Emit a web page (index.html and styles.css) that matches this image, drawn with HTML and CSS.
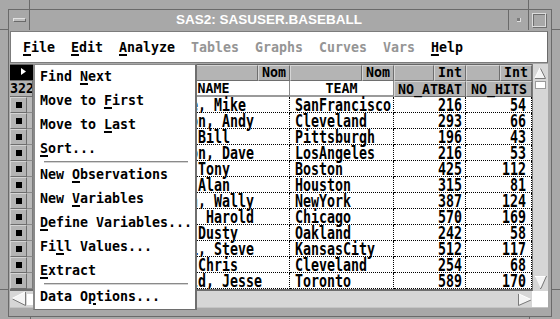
FILE: index.html
```html
<!DOCTYPE html>
<html>
<head>
<meta charset="utf-8">
<title>SAS2: SASUSER.BASEBALL</title>
<link rel="stylesheet" href="styles.css">
</head>
<body>
<div class="screen">
  <div class="window">
    <div class="titlebar">
      <div class="tbtn tbtn-menu"><span class="bar"></span></div>
      <div class="title">SAS2: SASUSER.BASEBALL</div>
      <div class="tbtn tbtn-min"><span class="dot"></span></div>
      <div class="tbtn tbtn-max"><span class="box"></span></div>
    </div>
    <div class="menubar">
      <span class="mi"><u>F</u>ile</span>
      <span class="mi"><u>E</u>dit</span>
      <span class="mi"><u>A</u>nalyze</span>
      <span class="mi off">Tables</span>
      <span class="mi off">Graphs</span>
      <span class="mi off">Curves</span>
      <span class="mi off">Vars</span>
      <span class="mi"><u>H</u>elp</span>
    </div>
    <div class="content">
      <div class="tablerow">
        <div class="grid">
          <!-- type row -->
          <div class="corner"><svg width="23" height="15" viewBox="0 0 23 15"><polygon points="11,3 16,6.5 11,10" fill="#fff"/></svg></div>
          <div class="t"><span class="fill"></span><span class="lab">Nom</span></div>
          <div class="t"><span class="fill"></span><span class="lab">Nom</span></div>
          <div class="t"><span class="fill"></span><span class="lab">Nom</span></div>
          <div class="t"><span class="fill"></span><span class="lab">Int</span></div>
          <div class="t"><span class="fill"></span><span class="lab">Int</span></div>
          <!-- name row -->
          <div class="count">322</div>
          <div class="hn">ID</div>
          <div class="hn"><span class="hv">NAME</span></div>
          <div class="hn"><span class="hv">TEAM</span></div>
          <div class="hg"><span class="hv">NO_ATBAT</span></div>
          <div class="hg"><span class="hv">NO_HITS</span></div>
          <!-- data -->
          <div class="rm"><span class="rb"><i></i></span><span class="rg"></span></div><div class="d"></div><div class="d l"><span class="v">Aldrete, Mike</span></div><div class="d t2"><span class="v">SanFrancisco</span></div><div class="d r"><span class="v">216</span></div><div class="d r2"><span class="v">54</span></div>
          <div class="rm"><span class="rb"><i></i></span><span class="rg"></span></div><div class="d"></div><div class="d l"><span class="v">Allanson, Andy</span></div><div class="d t2"><span class="v">Cleveland</span></div><div class="d r"><span class="v">293</span></div><div class="d r2"><span class="v">66</span></div>
          <div class="rm"><span class="rb"><i></i></span><span class="rg"></span></div><div class="d"></div><div class="d l"><span class="v">Almon, Bill</span></div><div class="d t2"><span class="v">Pittsburgh</span></div><div class="d r"><span class="v">196</span></div><div class="d r2"><span class="v">43</span></div>
          <div class="rm"><span class="rb"><i></i></span><span class="rg"></span></div><div class="d"></div><div class="d l"><span class="v">Anderson, Dave</span></div><div class="d t2"><span class="v">LosAngeles</span></div><div class="d r"><span class="v">216</span></div><div class="d r2"><span class="v">53</span></div>
          <div class="rm"><span class="rb"><i></i></span><span class="rg"></span></div><div class="d"></div><div class="d l"><span class="v">Armas, Tony</span></div><div class="d t2"><span class="v">Boston</span></div><div class="d r"><span class="v">425</span></div><div class="d r2"><span class="v">112</span></div>
          <div class="rm"><span class="rb"><i></i></span><span class="rg"></span></div><div class="d"></div><div class="d l"><span class="v">Ashby, Alan</span></div><div class="d t2"><span class="v">Houston</span></div><div class="d r"><span class="v">315</span></div><div class="d r2"><span class="v">81</span></div>
          <div class="rm"><span class="rb"><i></i></span><span class="rg"></span></div><div class="d"></div><div class="d l"><span class="v">Backman, Wally</span></div><div class="d t2"><span class="v">NewYork</span></div><div class="d r"><span class="v">387</span></div><div class="d r2"><span class="v">124</span></div>
          <div class="rm"><span class="rb"><i></i></span><span class="rg"></span></div><div class="d"></div><div class="d l"><span class="v">Baines, Harold</span></div><div class="d t2"><span class="v">Chicago</span></div><div class="d r"><span class="v">570</span></div><div class="d r2"><span class="v">169</span></div>
          <div class="rm"><span class="rb"><i></i></span><span class="rg"></span></div><div class="d"></div><div class="d l"><span class="v">Baker, Dusty</span></div><div class="d t2"><span class="v">Oakland</span></div><div class="d r"><span class="v">242</span></div><div class="d r2"><span class="v">58</span></div>
          <div class="rm"><span class="rb"><i></i></span><span class="rg"></span></div><div class="d"></div><div class="d l"><span class="v">Balboni, Steve</span></div><div class="d t2"><span class="v">KansasCity</span></div><div class="d r"><span class="v">512</span></div><div class="d r2"><span class="v">117</span></div>
          <div class="rm"><span class="rb"><i></i></span><span class="rg"></span></div><div class="d"></div><div class="d l"><span class="v">Bando, Chris</span></div><div class="d t2"><span class="v">Cleveland</span></div><div class="d r"><span class="v">254</span></div><div class="d r2"><span class="v">68</span></div>
          <div class="rm"><span class="rb"><i></i></span><span class="rg"></span></div><div class="d"></div><div class="d l"><span class="v">Barfield, Jesse</span></div><div class="d t2"><span class="v">Toronto</span></div><div class="d r"><span class="v">589</span></div><div class="d r2"><span class="v">170</span></div>
        </div>
        <div class="vscroll">
          <svg class="arrow" width="15" height="16" viewBox="0 0 15 16"><polygon points="7,4 12,14 2,14" fill="#f4f4f4"/><polyline points="7,4 2,14" stroke="#ffffff" fill="none"/><polyline points="7.5,4.5 12.5,14.5 2,14.5" stroke="#7a7a7a" fill="none"/></svg>
          <div class="vthumb"></div>
          <div class="spacer"></div>
          <svg class="arrow" width="15" height="15" viewBox="0 0 15 15"><polygon points="2,1 13,1 7.5,13" fill="#f4f4f4"/><polyline points="2,1.5 13,1.5" stroke="#ffffff" fill="none"/><polyline points="13.5,1 8,13.5 7,13.5" stroke="#7a7a7a" fill="none"/></svg>
        </div>
      </div>
      <div class="hscroll">
        <svg class="arrow" width="17" height="16" viewBox="0 0 17 16"><polygon points="2,7.5 15,1 15,14" fill="#f4f4f4"/><polyline points="2,7.5 15,1" stroke="#ffffff" fill="none"/><polyline points="2.5,8 15.5,14.5 15.5,1" stroke="#7a7a7a" fill="none"/></svg>
        <div class="hthumb"></div>
        <div class="spacer"></div>
        <svg class="arrow" width="14" height="16" viewBox="0 0 14 16"><polygon points="1,3 13,8.5 1,14" fill="#f4f4f4"/><polyline points="1,3 13,8.5" stroke="#ffffff" fill="none"/><polyline points="0.5,3 0.5,14.5 13,9" stroke="#7a7a7a" fill="none"/></svg>
        <div class="hcorner"></div>
      </div>
      <div class="popup">
        <div class="pi">Find <u>N</u>ext</div>
        <div class="pi">Move to <u>F</u>irst</div>
        <div class="pi">Move to <u>L</u>ast</div>
        <div class="pi"><u>S</u>ort...</div>
        <div class="sep"></div>
        <div class="pi">New <u>O</u>bservations</div>
        <div class="pi">New <u>V</u>ariables</div>
        <div class="pi"><u>D</u>efine Variables...</div>
        <div class="pi">Fi<u>l</u>l Values...</div>
        <div class="pi"><u>E</u>xtract</div>
        <div class="sep"></div>
        <div class="pi">Data O<u>p</u>tions...</div>
      </div>
    </div>
  </div>
</div>
</body>
</html>
```
FILE: styles.css
```css
* { box-sizing: border-box; }
html, body { margin: 0; padding: 0; }
body {
  width: 560px;
  height: 319px;
  overflow: hidden;
  background: #a8a8a8;
  color: #000;
  font-family: "DejaVu Sans Mono", "Liberation Mono", monospace;
  font-weight: bold;
  font-size: 13.29px;
}
.screen {
  width: 560px;
  height: 319px;
  padding: 9px 8px 0 8px;
  background:
    linear-gradient(#6a6a6a, #6a6a6a) 29px 0 / 1px 9px no-repeat,
    linear-gradient(#6a6a6a, #6a6a6a) 528px 0 / 1px 9px no-repeat,
    linear-gradient(#6a6a6a, #6a6a6a) 30px 317px / 1px 2px no-repeat,
    linear-gradient(#6a6a6a, #6a6a6a) 529px 317px / 1px 2px no-repeat,
    linear-gradient(#6a6a6a, #6a6a6a) 0 29px / 8px 1px no-repeat,
    linear-gradient(#6a6a6a, #6a6a6a) 552px 29px / 8px 1px no-repeat,
    linear-gradient(#6a6a6a, #6a6a6a) 0 289px / 8px 1px no-repeat,
    linear-gradient(#6a6a6a, #6a6a6a) 552px 289px / 8px 1px no-repeat,
    #a8a8a8;
}
.window {
  width: 544px;
  height: 308px;
  border: 1px solid #6a6a6a;
  padding: 0 3px 0 1px;
  display: flex;
  flex-direction: column;
  background: #a8a8a8;
}

/* title bar */
.titlebar {
  display: flex;
  height: 20px;
  flex: none;
}
.tbtn {
  width: 20px;
  height: 20px;
  display: flex;
  align-items: center;
  justify-content: center;
  flex: none;
}
.tbtn-menu { border-right: 1px solid #6a6a6a; }
.tbtn-menu .bar {
  width: 13px;
  height: 4px;
  background: #bcbcbc;
  border-top: 1px solid #e2e2e2;
  border-left: 1px solid #e2e2e2;
  border-bottom: 1px solid #6a6a6a;
  border-right: 1px solid #6a6a6a;
}
.title {
  flex: 1;
  text-align: center;
  color: #fff;
  font-family: "Liberation Sans", Arial, sans-serif;
  font-weight: bold;
  font-size: 13.5px;
  line-height: 20px;
  white-space: nowrap;
}
.tbtn-min { border-left: 1px solid #6a6a6a; }
.tbtn-min .dot {
  width: 4px;
  height: 4px;
  background: #7c7c7c;
  border-right: 1px solid #e0e0e0;
  border-bottom: 1px solid #e0e0e0;
}
.tbtn-max { border-left: 1px solid #6a6a6a; }
.tbtn-max .box {
  width: 14px;
  height: 14px;
  border: 1px solid #dcdcdc;
  box-shadow: 1px 1px 0 #6e6e6e, inset 1px 1px 0 #6e6e6e;
}

/* menu bar */
.menubar {
  margin-top: 1px;
  height: 32px;
  flex: none;
  background: #fff;
  border: 1px solid #7c7c7c;
  border-right-color: #6a6a6a;
  display: flex;
  align-items: center;
  gap: 16px;
  padding-left: 12px;
}
.mi { line-height: 15px; white-space: pre; }
.mi.off { color: #959595; }
u {
  text-decoration: underline;
  text-decoration-thickness: 2px;
  text-underline-offset: 2px;
}

/* content */
.content {
  margin-top: 1px;
  position: relative;
  flex: none;
}
.tablerow { display: flex; }
.grid {
  width: 522px;
  height: 227px;
  border-top: 1px solid #666;
  border-bottom: 2px solid #6e6e6e;
  display: grid;
  grid-template-columns: 23px 105px 152px 104px 72px 66px;
  grid-template-rows: repeat(14, 16px);
  background: #fff;
}
.grid > div {
  overflow-x: clip;
  overflow-y: visible;
  white-space: pre;
  line-height: 15px;
}
.corner {
  background: #000;
  border-bottom: 1px solid #6e6e6e;
}
.corner svg { display: block; }
.t {
  display: flex;
  background: #b4b4b4;
}
.t .fill, .t .lab {
  border-top: 1px solid #d6d6d6;
  border-left: 1px solid #d6d6d6;
  border-right: 1px solid #6e6e6e;
  border-bottom: 1px solid #6e6e6e;
  line-height: 13px;
}
.t .fill { flex: 1; }
.t .lab {
  width: 32px;
  flex: none;
  text-align: right;
  padding-right: 3px;
}
.count {
  background: #b4b4b4;
  border-right: 1px solid #6e6e6e;
  border-bottom: 1px solid #6e6e6e;
}
.hn {
  background: #fff;
  text-align: center;
  border-right: 1px solid #8a8a8a;
  border-bottom: 2px solid #9a9a9a;
}
.hg {
  background: #b4b4b4;
  text-align: center;
  border-top: 1px solid #d6d6d6;
  border-left: 1px solid #d6d6d6;
  border-right: 1px solid #6e6e6e;
  border-bottom: 1px solid #6e6e6e;
}
.hv {
  display: inline-block;
  transform: scaleY(1.1);
  line-height: 12px;
}
.rm {
  display: flex;
  background: #b8b8b8;
}
.rb {
  width: 17px;
  flex: none;
  display: flex;
  align-items: center;
  justify-content: center;
  background: #b4b4b4;
  border-top: 1px solid #d4d4d4;
  border-left: 1px solid #d4d4d4;
  border-right: 1px solid #6e6e6e;
  border-bottom: 1px solid #6e6e6e;
}
.rb i {
  display: block;
  width: 6px;
  height: 6px;
  background: #000;
}
.rg {
  flex: 1;
  background: #bababa;
  border-bottom: 1px solid #8a8a8a;
  border-right: 1px solid #7a7a7a;
}
.d {
  background: #fff;
  border-right: 1px dotted #000;
  border-bottom: 1px dotted #000;
}
.d.l { padding-left: 4px; }
.d.t2 { padding-left: 5px; }
.d.r { text-align: right; padding-right: 3px; }
.d.r2 { text-align: right; padding-right: 5px; }
.v {
  display: inline-block;
  line-height: 14px;
  transform: translateY(1px) scaleY(1.27);
}

/* scrollbars */
.arrow { display: block; flex: none; }
.spacer { flex: 1; }
.vscroll {
  width: 16px;
  height: 227px;
  background: #d6d6d6;
  border-left: 1px solid #7a7a7a;
  display: flex;
  flex-direction: column;
}
.vthumb {
  margin: 1px 2px 0 2px;
  height: 8px;
  flex: none;
  background: #fff;
  border: 1px solid #9a9a9a;
}
.vscroll .arrow:last-child { margin-bottom: 1px; }
.hscroll {
  height: 17px;
  display: flex;
  align-items: flex-start;
  background: #d6d6d6;
  border-bottom: 1px solid #c4c4c4;
}
.hthumb {
  width: 6px;
  height: 11px;
  margin-top: 3px;
  flex: none;
  background: #fff;
}
.hcorner {
  width: 16px;
  height: 16px;
  flex: none;
  background: #fff;
}

/* popup menu */
.popup {
  position: absolute;
  left: 23px;
  top: 0;
  width: 164px;
  height: 246px;
  background: #fff;
  border-top: 1px solid #8a8a8a;
  border-left: 2px solid #8a8a8a;
  border-right: 2px solid #6e6e6e;
  border-bottom: 1px solid #6e6e6e;
  z-index: 2;
}
.pi {
  height: 24px;
  line-height: 24px;
  padding-left: 5px;
  white-space: pre;
}
.sep {
  height: 2px;
  margin: 0 7px 0 9px;
  border-top: 1px solid #8a8a8a;
  border-bottom: 1px solid #d4d4d4;
}
```
